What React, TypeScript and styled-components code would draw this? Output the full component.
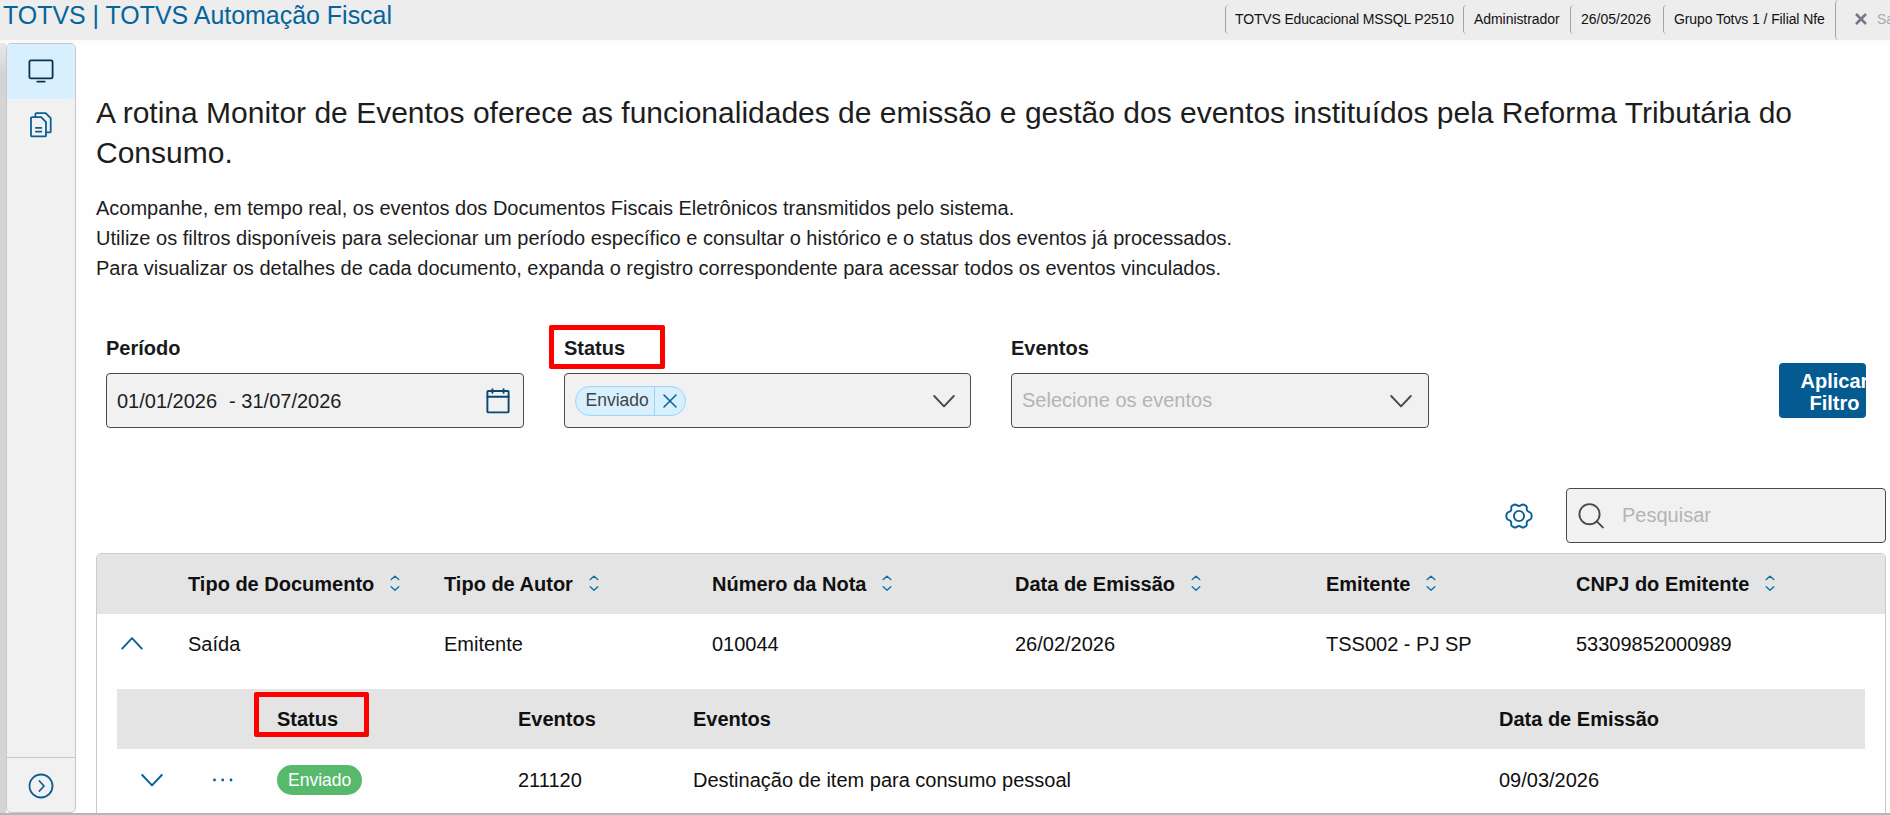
import React from "react";
import styled, { createGlobalStyle } from "styled-components";

const GlobalStyle = createGlobalStyle`
  *, *::before, *::after { box-sizing: border-box; }
  body { margin: 0; background: #fff; font-family: "Liberation Sans", Arial, sans-serif; color: #121212; }
  h1, p { margin: 0; font-weight: 400; }
`;

const Page = styled.div`
  display: flex;
  flex-direction: column;
  width: 1890px;
  height: 815px;
  overflow: hidden;
  background: #fefefe;
  border-bottom: 2px solid #b6b7b8;
`;

const TopBar = styled.header`
  display: flex;
  justify-content: space-between;
  flex: none;
  height: 43px;
  background: #ededed;
  border-bottom: 3px solid #fafafa;
`;

const AppTitle = styled.div`
  padding-left: 3px;
  font-size: 24.95px;
  line-height: 30px;
  color: #04649b;
  white-space: nowrap;
`;

const Session = styled.div`
  display: flex;
  flex: none;
  width: 665px;
  font-size: 14px;
  white-space: nowrap;
`;

const SessionItem = styled.div<{ $width: number; $tracking?: number }>`
  flex: none;
  width: ${(p) => p.$width}px;
  height: 29px;
  margin-top: 5px;
  padding-left: 10px;
  line-height: 28px;
  letter-spacing: ${(p) => p.$tracking ?? 0}px;
  border-left: 1px solid #a3a3a3;
  border-radius: 4px;

  &:first-child {
    padding-left: 9px;
  }
`;

const ExitButton = styled.div`
  display: flex;
  align-items: center;
  gap: 10px;
  flex: none;
  width: 80px;
  height: 40px;
  padding: 0 0 3px 19px;
  color: #a9a9ad;
  border-left: 1px solid #a3a3a3;
  border-radius: 4px;
`;

const Body = styled.div`
  display: flex;
  flex: 1;
  min-height: 0;
`;

const Gutter = styled.div`
  flex: none;
  width: 6px;
  background: linear-gradient(#e9e9e9, #d4d4d4 30px);
`;

const Sidebar = styled.nav`
  display: flex;
  flex-direction: column;
  flex: none;
  width: 70px;
  height: 770px;
  background: #f1f1f1;
  border: 1px solid #c5c7c9;
  border-radius: 5px;
  overflow: hidden;
`;

const NavItem = styled.div<{ $active?: boolean }>`
  display: flex;
  align-items: center;
  justify-content: center;
  height: 55px;
  padding-bottom: ${(p) => (p.$active ? 2 : 3)}px;
  color: ${(p) => (p.$active ? "#08324e" : "#0a5f94")};
  background: ${(p) => (p.$active ? "#d8f0fe" : "transparent")};
  border-radius: 0 0 4px 0;
`;

const NavToggle = styled.div`
  display: flex;
  align-items: center;
  justify-content: center;
  height: 55px;
  margin-top: auto;
  padding-top: 2px;
  color: #0a5f94;
  border-top: 1px solid #c5c7c9;
`;

const Main = styled.main`
  flex: 1;
  min-width: 0;
  padding: 50px 4px 0 20px;
`;

const Heading = styled.h1`
  width: 1740px;
  font-size: 30px;
  line-height: 40px;
  color: #1d1d1d;
`;

const Intro = styled.div`
  margin-top: 20px;
  font-size: 20px;
  line-height: 30px;
  color: #1d1d1d;
`;

const Filters = styled.section`
  display: flex;
  gap: 40px;
  margin-top: 49px;
  padding: 0 20px 0 10px;
`;

const Field = styled.div<{ $width: number }>`
  flex: none;
  width: ${(p) => p.$width}px;
`;

const FieldLabel = styled.div`
  position: relative;
  height: 41px;
  line-height: 33px;
  font-size: 20px;
  font-weight: 700;
  color: #1a1a1a;
`;

const Control = styled.div<{ $pad?: number }>`
  display: flex;
  align-items: center;
  height: 55px;
  padding: 0 ${(p) => p.$pad ?? 15}px 0 10px;
  font-size: 20px;
  background: #f1f1f1;
  border: 1px solid #4a4a4a;
  border-radius: 4px;
`;

const ControlText = styled.span<{ $muted?: boolean; $gap?: number }>`
  margin-right: ${(p) => p.$gap ?? 0}px;
  padding-top: ${(p) => (p.$muted ? 0 : 1)}px;
  color: ${(p) => (p.$muted ? "#b4b4b4" : "#1e1e1e")};
  white-space: nowrap;
`;

const EndIcon = styled.span`
  display: flex;
  margin-left: auto;
  color: #4a4a4a;
`;

const Tag = styled.span`
  display: flex;
  height: 30px;
  font-size: 17.5px;
  line-height: 26px;
  color: #3f4447;
  background: #d8f0fe;
  border: 1px solid #9bd6f8;
  border-radius: 15px;
`;

const TagLabel = styled.span`
  padding: 0 5.5px 0 9.5px;
`;

const TagRemove = styled.span`
  display: flex;
  align-items: center;
  justify-content: center;
  width: 31px;
  color: #0a5f94;
  border-left: 1px solid #9bd6f8;
`;

const Highlight = styled.span<{ $left: number; $top: number; $width: number; $height: number }>`
  position: absolute;
  left: ${(p) => p.$left}px;
  top: ${(p) => p.$top}px;
  width: ${(p) => p.$width}px;
  height: ${(p) => p.$height}px;
  border: 5px solid #fe0000;
  border-radius: 2px;
`;

const ApplyButton = styled.div`
  display: flex;
  flex: none;
  width: 87px;
  height: 55px;
  margin: 31px 0 0 auto;
  padding: 7px 0 0 21px;
  font-size: 20px;
  font-weight: 700;
  line-height: 22px;
  text-align: center;
  color: #fff;
  background: #045b92;
  border-radius: 4px;
  overflow: hidden;
`;

const ApplyLabel = styled.span`
  flex: none;
  width: 69px;
`;

const Toolbar = styled.div`
  display: flex;
  align-items: center;
  justify-content: flex-end;
  gap: 33px;
  margin: 60px 0 10px;
  color: #0a5f94;
`;

const Search = styled(Control)`
  width: 320px;
  padding-left: 11px;
  gap: 18px;
  color: #4a4a4a;
`;

const TableFrame = styled.section`
  height: 300px;
  border: 1px solid #c9cacb;
  border-radius: 5px;
  overflow: hidden;
`;

const Row = styled.div<{ $cols: string; $height: number; $head?: boolean }>`
  display: grid;
  grid-template-columns: ${(p) => p.$cols};
  align-items: center;
  height: ${(p) => p.$height}px;
  font-size: 20px;
  font-weight: ${(p) => (p.$head ? 700 : 400)};
  color: #101010;
  background: ${(p) => (p.$head ? "#e4e4e4" : "transparent")};
  white-space: nowrap;
`;

const Cell = styled.div<{ $indent?: number }>`
  position: relative;
  display: flex;
  align-items: center;
  gap: 16px;
  padding-left: ${(p) => p.$indent ?? 0}px;
  color: inherit;
`;

const IconCell = styled(Cell)`
  color: #0a5f94;
`;

const SortMark = styled.span`
  display: flex;
  padding-bottom: 2px;
`;

const Nested = styled.div`
  margin: 15px 20px 0;
`;

const StatusBadge = styled.span`
  height: 30px;
  padding: 0 11px;
  font-size: 17.5px;
  line-height: 30px;
  color: #fff;
  background: #56b96b;
  border-radius: 15px;
`;

const Chevron = ({ up = false }: { up?: boolean }) => (
  <svg width="22" height="14" viewBox="0 0 22 14" fill="none" stroke="currentColor" strokeWidth="1.9" strokeLinecap="round" strokeLinejoin="round">
    <path d={up ? "M1.2 11.6 11 1.2l9.8 10.4" : "M1.2 2 11 12.4 20.8 2"} />
  </svg>
);

const SortIcon = () => (
  <svg width="10" height="16" viewBox="0 0 10 16" fill="none" stroke="#0a6da6" strokeWidth="1.3" strokeLinecap="round" strokeLinejoin="round">
    <path d="M1.2 4.6 5 1.2l3.8 3.4M1.2 11.8l3.8 3.4 3.8-3.4" />
  </svg>
);

const MonitorIcon = () => (
  <svg width="26" height="24" viewBox="0 0 26 24" fill="none" stroke="currentColor" strokeWidth="1.8" strokeLinecap="round">
    <rect x="1.4" y="1.4" width="23.2" height="18" rx="1.5" />
    <path d="M9.3 22.6h7.4" />
  </svg>
);

const DocumentsIcon = () => (
  <svg width="22" height="26" viewBox="0 0 22 26" fill="none" stroke="currentColor" strokeWidth="1.8" strokeLinecap="round" strokeLinejoin="round">
    <path d="M1 6.2a1 1 0 0 1 1-1h9.2l4.8 4.9v13.3a1 1 0 0 1-1 1H2a1 1 0 0 1-1-1z" />
    <path d="M5.4 5V2.2a1 1 0 0 1 1-1h9.3l5 5v13.2a1 1 0 0 1-1 1h-3.5M5.8 15.8h5.6M5.8 19.6h5.6" />
  </svg>
);

const ExpandIcon = () => (
  <svg width="26" height="26" viewBox="0 0 26 26" fill="none" stroke="currentColor" strokeWidth="1.8" strokeLinecap="round" strokeLinejoin="round">
    <circle cx="13" cy="13" r="11.5" />
    <path d="m11.4 8 4.6 5-4.6 5" />
  </svg>
);

const CalendarIcon = () => (
  <svg width="24" height="26" viewBox="0 0 24 26" fill="none" stroke="#08486f" strokeWidth="1.9" strokeLinecap="round">
    <rect x="1.4" y="3" width="21.2" height="21.4" rx="0.8" />
    <path d="M1.4 8.8h21.2M6.4 1.2v3.6M17.6 1.2v3.6" />
  </svg>
);

const GearIcon = () => (
  <svg width="28" height="26" viewBox="0 0 28 26" fill="none" stroke="currentColor" strokeWidth="1.9" strokeLinejoin="round">
    <path d="M9.2 1.6C11 .7 12 3 14 3s3-2.3 4.8-1.4l2.2 1.2c1.7 1.2.2 2.9 1 4.6s3.4 1.2 4.2 3.2c.6 1.5.6 3.3 0 4.8-.8 2-3.2 1.5-4.2 3.2s.7 3.4-1 4.6l-2.2 1.2C17 25.3 16 23 14 23s-3 2.3-4.8 1.4L7 23.2c-1.7-1.2-.2-2.9-1-4.6s-3.4-1.2-4.2-3.2c-.6-1.5-.6-3.3 0-4.8.8-2 3.2-1.5 4.2-3.2s-.7-3.4 1-4.6z" />
    <circle cx="14" cy="13" r="5.1" />
  </svg>
);

const SearchIcon = () => (
  <svg width="26" height="26" viewBox="0 0 26 26" fill="none" stroke="currentColor" strokeWidth="1.9" strokeLinecap="round">
    <circle cx="11.5" cy="11.2" r="10.1" />
    <path d="m18.8 18.4 6 6" />
  </svg>
);

const RemoveIcon = () => (
  <svg width="14" height="14" viewBox="0 0 14 14" fill="none" stroke="currentColor" strokeWidth="1.5" strokeLinecap="round">
    <path d="m1 1 12 12M13 1 1 13" />
  </svg>
);

const ExitIcon = () => (
  <svg width="12" height="12" viewBox="0 0 12 12" fill="none" stroke="#747985" strokeWidth="2.6">
    <path d="m1 1 10 10M11 1 1 11" />
  </svg>
);

const DotsIcon = () => (
  <svg width="22" height="4" viewBox="0 0 22 4" fill="currentColor">
    <circle cx="2.5" cy="2" r="1.4" />
    <circle cx="10.7" cy="2" r="1.4" />
    <circle cx="19" cy="2" r="1.4" />
  </svg>
);

const session = [
  { text: "TOTVS Educacional MSSQL P2510", width: 238, tracking: -0.15 },
  { text: "Administrador", width: 107, tracking: -0.06 },
  { text: "26/05/2026", width: 93, tracking: 0 },
  { text: "Grupo Totvs 1 / Filial Nfe", width: 172, tracking: -0.09 },
];

const documentCols = "91px 256px 268px 303px 311px 250px 1fr";
const eventCols = "160px 241px 175px 806px 1fr";

const documentHeaders = [
  "Tipo de Documento",
  "Tipo de Autor",
  "Número da Nota",
  "Data de Emissão",
  "Emitente",
  "CNPJ do Emitente",
];
const documentRow = ["Saída", "Emitente", "010044", "26/02/2026", "TSS002 - PJ SP", "53309852000989"];

export default function App() {
  return (
    <Page>
      <GlobalStyle />
      <TopBar>
        <AppTitle>TOTVS | TOTVS Automação Fiscal</AppTitle>
        <Session>
          {session.map((s) => (
            <SessionItem key={s.text} $width={s.width} $tracking={s.tracking}>{s.text}</SessionItem>
          ))}
          <ExitButton><ExitIcon />Sair</ExitButton>
        </Session>
      </TopBar>
      <Body>
        <Gutter />
        <Sidebar>
          <NavItem $active><MonitorIcon /></NavItem>
          <NavItem><DocumentsIcon /></NavItem>
          <NavToggle><ExpandIcon /></NavToggle>
        </Sidebar>
        <Main>
          <Heading>
            A rotina Monitor de Eventos oferece as funcionalidades de emissão e gestão dos eventos instituídos pela Reforma Tributária do Consumo.
          </Heading>
          <Intro>
            <p>Acompanhe, em tempo real, os eventos dos Documentos Fiscais Eletrônicos transmitidos pelo sistema.</p>
            <p>Utilize os filtros disponíveis para selecionar um período específico e consultar o histórico e o status dos eventos já processados.</p>
            <p>Para visualizar os detalhes de cada documento, expanda o registro correspondente para acessar todos os eventos vinculados.</p>
          </Intro>
          <Filters>
            <Field $width={418}>
              <FieldLabel>Período</FieldLabel>
              <Control $pad={13}>
                <ControlText $gap={12}>01/01/2026</ControlText>
                <ControlText>- 31/07/2026</ControlText>
                <EndIcon><CalendarIcon /></EndIcon>
              </Control>
            </Field>
            <Field $width={407}>
              <FieldLabel>Status<Highlight $left={-15} $top={-7} $width={116} $height={44} /></FieldLabel>
              <Control>
                <Tag>
                  <TagLabel>Enviado</TagLabel>
                  <TagRemove><RemoveIcon /></TagRemove>
                </Tag>
                <EndIcon><Chevron /></EndIcon>
              </Control>
            </Field>
            <Field $width={418}>
              <FieldLabel>Eventos</FieldLabel>
              <Control $pad={16}>
                <ControlText $muted>Selecione os eventos</ControlText>
                <EndIcon><Chevron /></EndIcon>
              </Control>
            </Field>
            <ApplyButton><ApplyLabel>Aplicar Filtro</ApplyLabel></ApplyButton>
          </Filters>
          <Toolbar>
            <GearIcon />
            <Search>
              <SearchIcon />
              <ControlText $muted>Pesquisar</ControlText>
            </Search>
          </Toolbar>
          <TableFrame>
            <Row $cols={documentCols} $height={60} $head>
              <Cell />
              {documentHeaders.map((h) => (
                <Cell key={h}>{h}<SortMark><SortIcon /></SortMark></Cell>
              ))}
            </Row>
            <Row $cols={documentCols} $height={60}>
              <IconCell $indent={24}><Chevron up /></IconCell>
              {documentRow.map((value) => (
                <Cell key={value}>{value}</Cell>
              ))}
            </Row>
            <Nested>
              <Row $cols={eventCols} $height={60} $head>
                <Cell />
                <Cell>Status<Highlight $left={-23} $top={-16} $width={115} $height={45} /></Cell>
                <Cell>Eventos</Cell>
                <Cell>Eventos</Cell>
                <Cell>Data de Emissão</Cell>
              </Row>
              <Row $cols={eventCols} $height={62}>
                <IconCell $indent={24}>
                  <Chevron />
                  <Cell $indent={33}><DotsIcon /></Cell>
                </IconCell>
                <Cell><StatusBadge>Enviado</StatusBadge></Cell>
                <Cell>211120</Cell>
                <Cell>Destinação de item para consumo pessoal</Cell>
                <Cell>09/03/2026</Cell>
              </Row>
            </Nested>
          </TableFrame>
        </Main>
      </Body>
    </Page>
  );
}
